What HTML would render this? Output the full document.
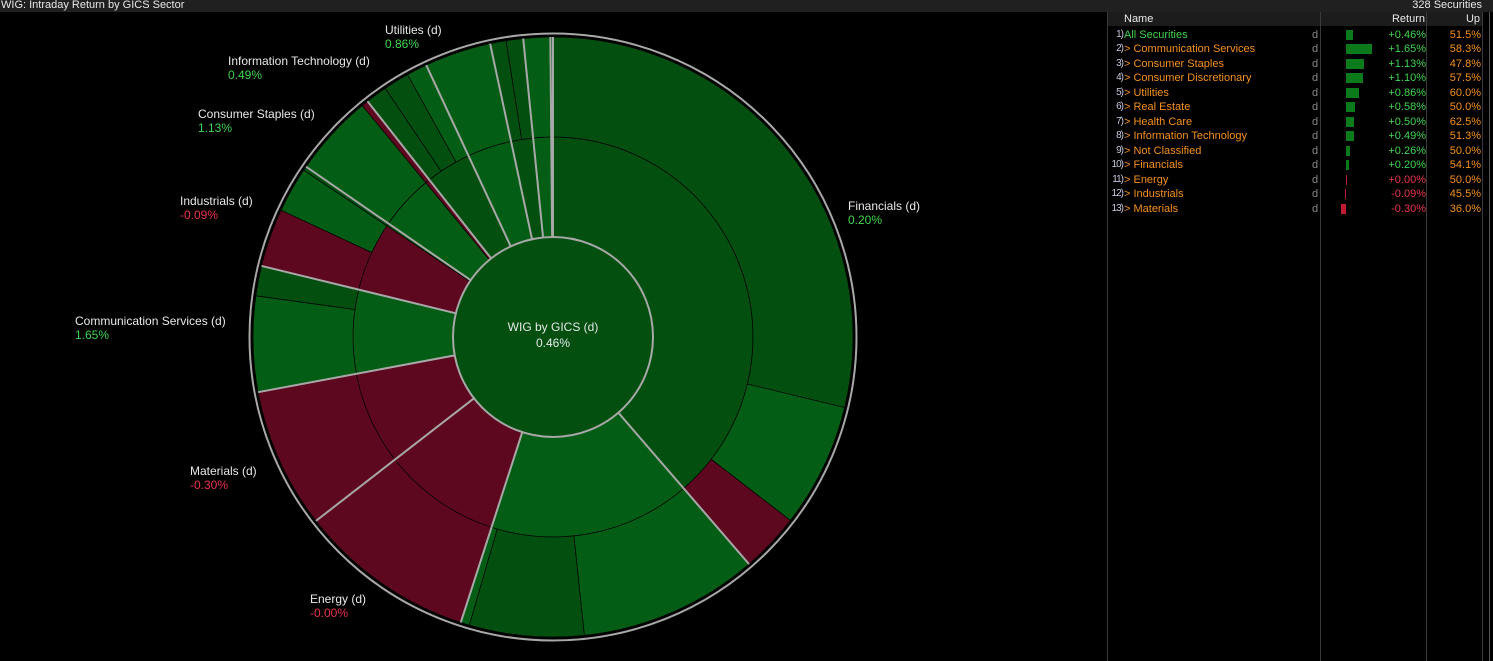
<!DOCTYPE html>
<html><head><meta charset="utf-8"><style>
body{margin:0;width:1493px;height:661px;background:#000;overflow:hidden;font-family:Tahoma,"Liberation Sans",sans-serif;position:relative}
.t{position:absolute;font-size:12px;white-space:nowrap;line-height:14px}
.w{color:#e8e8e8}.g{color:#3fd44f}.r{color:#e8364c}.o{color:#f5901e}
#hdr{position:absolute;left:0;top:0;width:1493px;height:12px;background:#202020}
.tb{position:absolute;font-size:11px;line-height:14px;white-space:nowrap}
.vl{position:absolute;top:12px;height:649px;width:1px;background:#3a3a3a}
</style></head><body>
<div id="hdr"></div>
<div class="t w" style="left:1px;top:-2px;font-size:11px">WIG: Intraday Return by GICS Sector</div>
<div class="t w" style="right:11px;top:-2px;font-size:11px">328 Securities</div>
<div style="position:absolute;left:1108px;top:12px;width:374px;height:14px;background:#1c1c1c"></div>
<div class="vl" style="left:1107px"></div><div class="vl" style="left:1320px"></div><div class="vl" style="left:1426px"></div><div class="vl" style="left:1482px"></div><div class="vl" style="left:1489px;background:#555"></div>
<div class="tb w" style="left:1124px;top:12px">Name</div>
<div class="tb w" style="left:1380px;top:12px;width:45px;text-align:right">Return</div>
<div class="tb w" style="left:1440px;top:12px;width:40px;text-align:right">Up</div>
<svg id="s" width="1493" height="661" style="position:absolute;left:0;top:0"></svg>
<div id="rows"></div>
<div class="t w" style="left:385px;top:23px">Utilities (d)</div><div class="t g" style="left:385px;top:37px">0.86%</div>
<div class="t w" style="left:228px;top:54px">Information Technology (d)</div><div class="t g" style="left:228px;top:68px">0.49%</div>
<div class="t w" style="left:198px;top:107px">Consumer Staples (d)</div><div class="t g" style="left:198px;top:121px">1.13%</div>
<div class="t w" style="left:180px;top:194px">Industrials (d)</div><div class="t r" style="left:180px;top:208px">-0.09%</div>
<div class="t w" style="left:75px;top:314px">Communication Services (d)</div><div class="t g" style="left:75px;top:328px">1.65%</div>
<div class="t w" style="left:190px;top:464px">Materials (d)</div><div class="t r" style="left:190px;top:478px">-0.30%</div>
<div class="t w" style="left:310px;top:592px">Energy (d)</div><div class="t r" style="left:310px;top:606px">-0.00%</div>
<div class="t w" style="left:848px;top:199px">Financials (d)</div><div class="t g" style="left:848px;top:213px">0.20%</div>
<div class="t w" style="left:473px;top:320px;width:160px;text-align:center">WIG by GICS (d)</div>
<div class="t w" style="left:473px;top:336px;width:160px;text-align:center">0.46%</div>
<script>
var cx=553,cy=337,R0=100,R1=200,R2=300;
var DG="#034f10",MG="#045d15",RD="#5e0820";
function p(r,a){a=a*Math.PI/180;return [cx+r*Math.sin(a),cy-r*Math.cos(a)];}
function seg(r1,r2,a1,a2,c){var A=p(r2,a1),B=p(r2,a2),C=p(r1,a2),D=p(r1,a1),l=(a2-a1)>180?1:0;
return '<path d="M'+A+' A'+r2+','+r2+' 0 '+l+' 1 '+B+' L'+C+' A'+r1+','+r1+' 0 '+l+' 0 '+D+'Z" fill="'+c+'" stroke="#000" stroke-width="0.7"/>';}
var h='';
var inner=[[0,139.2,DG],[139.2,197.9,MG],[197.9,232.2,RD],[232.2,259.4,RD],[259.4,283.7,MG],[283.7,303.8,RD],[303.8,304.6,DG],[304.6,320.5,MG],[320.5,321.8,RD],[321.8,335,DG],[335,347.9,MG],[347.9,354.3,DG],[354.3,359.5,MG],[359.5,360,DG]];
var outer=[[0,103.6,DG],[103.6,127.7,MG],[127.7,139.2,RD],[139.2,174,MG],[174,196.2,DG],[196.2,197.9,MG],[197.9,232.2,RD],[232.2,259.4,RD],[259.4,277.9,MG],[277.9,283.7,DG],[283.7,295,RD],[295,303.8,MG],[303.8,304.6,DG],[304.6,320.5,MG],[320.5,321.8,RD],[321.8,326,DG],[326,331,DG],[331,335,MG],[335,347.9,MG],[347.9,351,DG],[351,354.3,DG],[354.3,359.5,MG],[359.5,360,DG]];
inner.forEach(function(s){h+=seg(R0,R1,s[0],s[1],s[2]);});
outer.forEach(function(s){h+=seg(R1,R2,s[0],s[1],s[2]);});
h+='<circle cx="'+cx+'" cy="'+cy+'" r="'+R0+'" fill="'+DG+'" stroke="#a8a8a8" stroke-width="2"/>';
[0,139.2,197.9,232.2,259.4,283.7,304.6,321.8,335,347.9,354.3,359.5].forEach(function(a){var A=p(R0,a),B=p(R2,a);h+='<line x1="'+A[0]+'" y1="'+A[1]+'" x2="'+B[0]+'" y2="'+B[1]+'" stroke="#a8a8a8" stroke-width="2"/>';});
h+='<circle cx="'+cx+'" cy="'+cy+'" r="303.5" fill="none" stroke="#a8a8a8" stroke-width="2"/>';
document.getElementById('s').innerHTML=h;
var rows=[["All Securities",0.46,"51.5%"],["> Communication Services",1.65,"58.3%"],["> Consumer Staples",1.13,"47.8%"],["> Consumer Discretionary",1.10,"57.5%"],["> Utilities",0.86,"60.0%"],["> Real Estate",0.58,"50.0%"],["> Health Care",0.50,"62.5%"],["> Information Technology",0.49,"51.3%"],["> Not Classified",0.26,"50.0%"],["> Financials",0.20,"54.1%"],["> Energy",0.00,"50.0%"],["> Industrials",-0.09,"45.5%"],["> Materials",-0.30,"36.0%"]];
var o='';
rows.forEach(function(r,i){var y=27.5+i*14.5;
var ret=(r[1]>=0?'+':'')+r[1].toFixed(2)+'%';var rc=(r[1]>0)?'#3fd44f':'#e8364c';
var nm=i==0?'<span class="g">'+r[0]+'</span>':'<span class="o">'+r[0]+'</span>';
o+='<div class="tb" style="left:1106px;top:'+y+'px;width:17px;text-align:right;color:#c8c8e0;font-size:10px;letter-spacing:-1px">'+(i+1)+')</div>';
o+='<div class="tb" style="left:1124px;top:'+y+'px">'+nm+'</div>';
o+='<div class="tb" style="left:1312px;top:'+y+'px;color:#888">d</div>';
var w=Math.max(1,Math.abs(r[1])*15.5);var bx=r[1]>=0?1346:1346-w;
o+='<div style="position:absolute;left:'+bx+'px;top:'+(y+2)+'px;width:'+w+'px;height:10px;background:'+(r[1]>0?'#0b7a1a':'#c01a30')+'"></div>';
o+='<div class="tb" style="left:1370px;top:'+y+'px;width:56px;text-align:right;color:'+rc+'">'+ret+'</div>';
o+='<div class="tb" style="left:1430px;top:'+y+'px;width:51px;text-align:right;color:#f5901e">'+r[2]+'</div>';});
document.getElementById('rows').innerHTML=o;
</script>
</body></html>
